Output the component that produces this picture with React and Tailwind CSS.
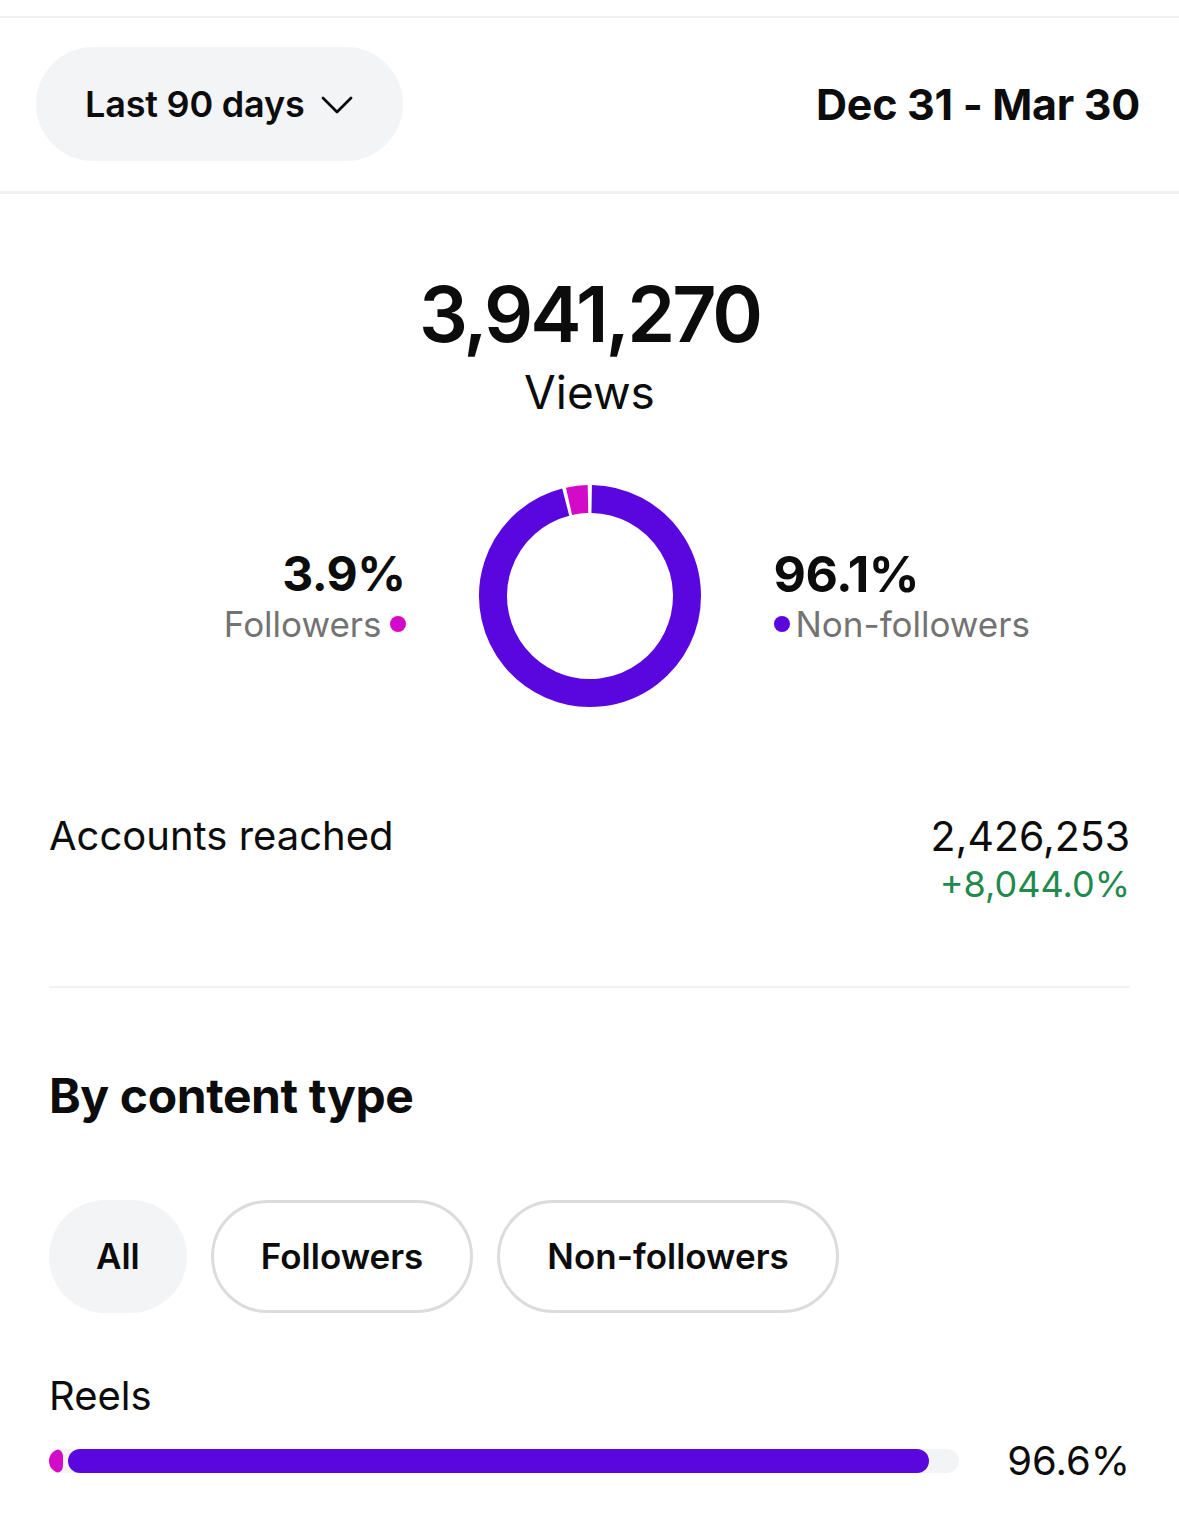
const PURPLE = "#5907de";
const PINK = "#d30ac8";

function arc(cx, cy, r, a0, a1) {
  // angles in degrees, 0 = top, clockwise
  const rad = (a) => ((a - 90) * Math.PI) / 180;
  const x0 = cx + r * Math.cos(rad(a0));
  const y0 = cy + r * Math.sin(rad(a0));
  const x1 = cx + r * Math.cos(rad(a1));
  const y1 = cy + r * Math.sin(rad(a1));
  const large = a1 - a0 > 180 ? 1 : 0;
  return `M ${x0} ${y0} A ${r} ${r} 0 ${large} 1 ${x1} ${y1}`;
}

function Donut() {
  return (
    <svg width="224" height="224" viewBox="0 0 224 224">
      <path d={arc(112, 112, 97, 1, 345.5)} fill="none" stroke={PURPLE} strokeWidth="28" />
      <path d={arc(112, 112, 97, 347.5, 358.8)} fill="none" stroke={PINK} strokeWidth="28" />
    </svg>
  );
}

function Chip({ label, active }) {
  return (
    <button
      className={
        "h-[113px] rounded-full px-[47px] text-[35px] font-semibold text-[#0c0c0d] " +
        (active ? "bg-[#f3f4f6]" : "border-[3px] border-[#dcdcdc] bg-white")
      }
    >
      {label}
    </button>
  );
}

export default function App() {
  return (
    <div className="w-[1179px] min-h-[1517px] bg-white text-[#0c0c0d]" style={{ fontFamily: "Inter, 'Noto Sans', sans-serif" }}>
      <div className="h-[16px]" />
      {/* Header */}
      <div className="flex items-center justify-between border-t-2 border-b-[3px] border-[#f0f0f0] pl-[36px] pr-[39px] pt-[29px] pb-[30px]">
        <button className="flex h-[114px] items-center gap-[16px] rounded-full bg-[#f3f4f6] pl-[49px] pr-[50px] text-[36px] font-semibold tracking-[-0.2px]">
          Last 90 days
          <svg width="32" height="18" viewBox="0 0 32 18" className="mt-[2px]">
            <polyline points="2,2 16,16 30,2" fill="none" stroke="#0c0c0d" strokeWidth="2.8" strokeLinecap="round" strokeLinejoin="round" />
          </svg>
        </button>
        <div className="text-[43px] font-bold tracking-[-0.3px]">Dec 31 - Mar 30</div>
      </div>

      {/* Views */}
      <div className="flex flex-col items-center pt-[72px]">
        <div className="text-[77px] font-semibold leading-[96px] tracking-[-3px]">3,941,270</div>
        <div className="text-[46px] leading-[60px]">Views</div>
      </div>

      {/* Donut + legend */}
      <div className="mt-[62px] grid grid-cols-[1fr_auto_1fr] items-center gap-[72px]">
        <div className="flex flex-col items-end">
          <div className="text-[48px] font-bold leading-[56px] tracking-[-0.5px]">3.9%</div>
          <div className="flex items-center gap-[8px] text-[35px] leading-[44px] text-[#737373]">
            Followers
            <span className="h-[16px] w-[16px] rounded-full" style={{ background: PINK }} />
          </div>
        </div>
        <Donut />
        <div className="flex flex-col items-start">
          <div className="text-[50px] font-bold leading-[56px] tracking-[-0.5px]">96.1%</div>
          <div className="flex items-center gap-[6px] text-[35px] leading-[44px] text-[#737373]">
            <span className="h-[16px] w-[16px] rounded-full" style={{ background: PURPLE }} />
            Non-followers
          </div>
        </div>
      </div>

      {/* Accounts reached */}
      <div className="px-[49px]">
        <div className="mt-[100px] flex items-start justify-between">
          <div className="text-[40px] leading-[56px]">Accounts reached</div>
          <div className="flex flex-col items-end">
            <div className="text-[41px] leading-[56px]">2,426,253</div>
            <div className="text-[36px] leading-[40px] text-[#1f8a4c]">+8,044.0%</div>
          </div>
        </div>
        <div className="mt-[82px] border-t-2 border-[#f2f2f2]" />

        {/* By content type */}
        <div className="mt-[78px] text-[48px] font-bold leading-[60px] tracking-[-0.4px]">By content type</div>
        <div className="mt-[74px] flex gap-[24px]">
          <Chip label="All" active />
          <Chip label="Followers" />
          <Chip label="Non-followers" />
        </div>

        <div className="mt-[57px] text-[40px] leading-[52px]">Reels</div>
        <div className="mt-[13px] flex items-center">
          <div className="relative flex h-[24px] w-[910px] items-center gap-[5px] overflow-hidden rounded-full bg-[#f3f4f6]">
            <div className="h-full w-[14px] rounded-full" style={{ background: PINK }} />
            <div className="h-full w-[861px] rounded-full" style={{ background: PURPLE }} />
          </div>
          <div className="flex-1 text-right text-[40px] leading-[52px]">96.6%</div>
        </div>
      </div>
    </div>
  );
}
